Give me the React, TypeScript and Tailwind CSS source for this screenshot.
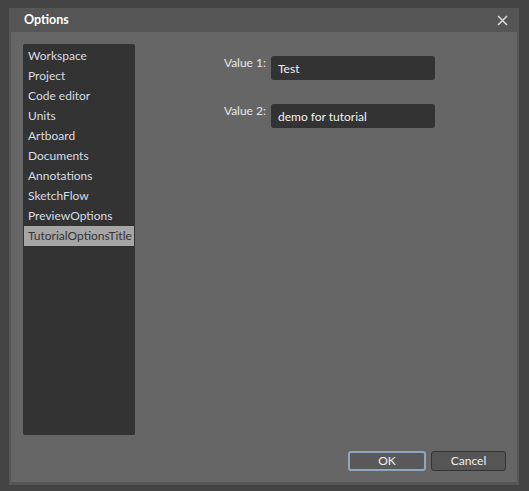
import React from "react";

const items = [
  "Workspace",
  "Project",
  "Code editor",
  "Units",
  "Artboard",
  "Documents",
  "Annotations",
  "SketchFlow",
  "PreviewOptions",
  "TutorialOptionsTitle",
];

export default function App() {
  const font = { fontFamily: 'Lato, "Noto Sans", sans-serif' };
  return (
    <div
      className="w-[529px] h-[491px] bg-[#444444] pl-[9px] pt-[8px] overflow-hidden"
      style={font}
    >
      <div className="w-[510px] h-[477px] bg-[#555555] flex flex-col px-[2px] pb-[3px]">
        <div className="h-[24px] flex items-center justify-between pl-[13px] pr-[8px] pt-[1px]">
          <span className="text-[12.5px] font-bold text-white leading-none">Options</span>
          <svg width="11" height="11" viewBox="0 0 11 11" className="mr-[1px]">
            <path d="M1 1 L10 10 M10 1 L1 10" stroke="#d8d8d8" strokeWidth="1.6" />
          </svg>
        </div>
        <div className="flex-1 bg-[#666666] flex flex-col pt-[12px] pl-[12px] pr-[11px]">
          <div className="flex h-[391px]">
            <div className="w-[112px] h-full bg-[#333333] rounded-[2px] pt-[2px] flex flex-col">
              {items.map((it, i) => {
                const sel = i === items.length - 1;
                return (
                  <div
                    key={it}
                    className={
                      "h-[20px] mx-[1px] pl-[4px] flex items-center text-[12px] whitespace-nowrap " +
                      (sel ? "bg-[#a6a6a6] text-[#333333]" : "text-[#d6dde4]")
                    }
                  >
                    {it}
                  </div>
                );
              })}
            </div>
            <div className="ml-[71px] pt-[12px] grid grid-cols-[60px_164px] gap-x-[5px] gap-y-[24px] content-start">
              <div className="text-right text-[12px] text-[#e6e6e6] leading-[14px]">Value 1:</div>
              <div className="h-[24px] bg-[#333333] rounded-[3px] flex items-center pl-[7px] pt-[2px] text-[12px] text-[#f2f2f2]">
                Test
              </div>
              <div className="text-right text-[12px] text-[#e6e6e6] leading-[14px]">Value 2:</div>
              <div className="h-[24px] bg-[#333333] rounded-[3px] flex items-center pl-[7px] pt-[2px] text-[12px] text-[#f2f2f2]">
                demo for tutorial
              </div>
            </div>
          </div>
          <div className="mt-[16px] flex justify-end gap-[5px]">
            <button className="w-[78px] h-[20px] rounded-[3px] border-[2px] border-[#8ea6bf] bg-[#595959] text-[12px] text-[#eeeeee] flex items-center justify-center">
              OK
            </button>
            <button className="w-[75px] h-[20px] rounded-[3px] border border-[#333333] bg-[#555555] text-[12px] text-[#eeeeee] flex items-center justify-center">
              Cancel
            </button>
          </div>
        </div>
      </div>
    </div>
  );
}
